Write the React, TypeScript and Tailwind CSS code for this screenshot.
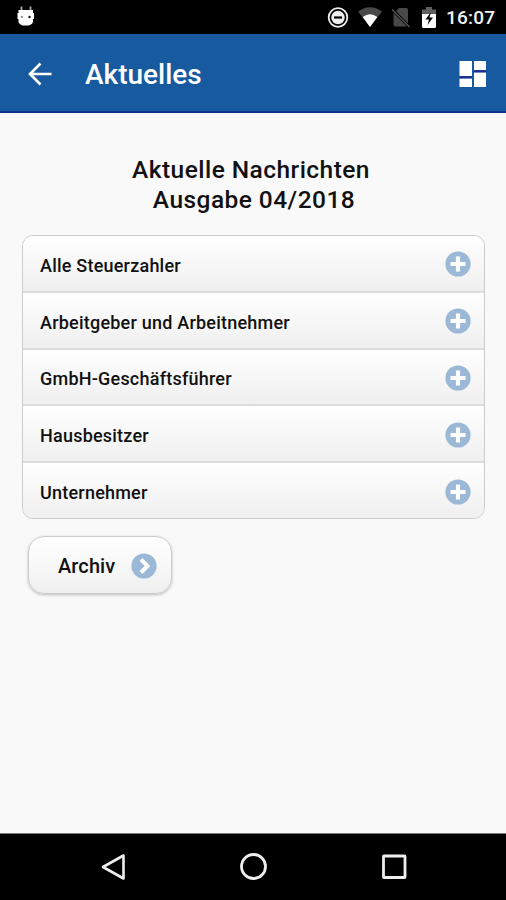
import React from 'react';

const topics = [
  'Alle Steuerzahler',
  'Arbeitgeber und Arbeitnehmer',
  'GmbH-Geschäftsführer',
  'Hausbesitzer',
  'Unternehmer',
];

const StatusBar: React.FC = () => (
  <div className="h-[34px] bg-black flex items-center justify-between pl-[17px] pr-[10px] shrink-0">
    {/* Notification icon */}
    <svg width="18" height="34" viewBox="0 0 18 34" fill="none">
      <path d="M4.500 6.500v4.500M13.500 6.500v4.500" stroke="#aaa" strokeWidth="1.800" />
      <path d="M1.500 10h14.500v3h1v6h-1v3q-1 3-4 3.500H5.500q-3-.5-4-3.500v-3h-1v-6h1z" fill="#fff" />
      <circle cx="5" cy="17" r="1.100" fill="#888" />
      <circle cx="12.500" cy="17" r="1.200" fill="#111" />
    </svg>

    <div className="flex items-center">
      {/* Do not disturb */}
      <svg width="22" height="34" viewBox="0 0 22 34" fill="none">
        <circle cx="11" cy="17.500" r="9.300" stroke="#eee" strokeWidth="1.800" />
        <circle cx="11" cy="17.500" r="6.700" fill="#eee" />
        <path d="M7 17.500h8" stroke="#000" strokeWidth="2.200" />
      </svg>
      {/* Wifi */}
      <svg className="ml-[9px]" width="24" height="34" viewBox="0 0 24 34">
        <path d="M0 11.500Q12 3 24 11.500L12 27z" fill="#484848" />
        <path d="M4.700 17Q12 11.500 19.300 17L12 27z" fill="#fff" />
      </svg>
      {/* No SIM */}
      <svg className="ml-[9px]" width="20" height="34" viewBox="0 0 20 34">
        <path d="M8 8H15q2 0 2 2v13.500L5 11zM2.500 13L16 26.500H4.500q-2 0-2-2z" fill="#484848" />
        <path d="M1 9.500L18.500 27" stroke="#5a5a5a" strokeWidth="1.200" />
      </svg>
      {/* Battery */}
      <svg className="ml-[10px]" width="16" height="34" viewBox="0 0 16 34">
        <path d="M5 7h6v2.500h4V15H1V9.500h4z" fill="#606060" />
        <path d="M1 14h14v12.500q0 1.500-1.500 1.500h-11Q1 28 1 26.500z" fill="#fff" />
        <path d="M10 12L4.500 19.500H8L6.500 25L12 17.500H8.500z" fill="#000" />
      </svg>
      <span className="ml-[9px] mt-px w-[50px] text-[19px] leading-[34px] font-medium text-[#f1f1f1] tracking-[0.2px] whitespace-nowrap">
        16:07
      </span>
    </div>
  </div>
);

const AppHeader: React.FC = () => (
  <header className="h-[79px] bg-[#185a9f] border-b-2 border-[#10308a] flex items-center pl-[28px] pr-[19px] shrink-0">
    <button className="mt-[2px]" aria-label="Zurück">
      <svg width="24" height="24" viewBox="0 0 24 24" fill="none">
        <path d="M12.500 1.500L2 12L12.500 22.500M2 12H23.500" stroke="#fff" strokeWidth="2.600" />
      </svg>
    </button>
    <h1 className="ml-[33px] mt-[4px] text-[28px] leading-8 font-medium text-white">Aktuelles</h1>
    <button className="ml-auto mt-[2px]" aria-label="Übersicht">
      <svg width="28" height="28" viewBox="0 0 28 28">
        <path d="M.5 1h12.500v15H.5zM15 1h12v9H15zM.5 18.500h12.500V27H.5zM15 12.500h12V27H15z" fill="#fff" />
        <path d="M.5 17.250h12.500M15 11.250h12" stroke="#202c94" strokeWidth="2" />
      </svg>
    </button>
  </header>
);

const PlusIcon: React.FC = () => (
  <svg width="26" height="26" viewBox="0 0 26 26">
    <circle cx="13" cy="13" r="12.600" fill="#9bb8d6" />
    <path d="M13 5.500v15M5.500 13h15" stroke="#fff" strokeWidth="4.200" />
  </svg>
);

const ArrowIcon: React.FC = () => (
  <svg width="26" height="26" viewBox="0 0 26 26" fill="none">
    <circle cx="13" cy="13" r="12.600" fill="#9bb8d6" />
    <path d="M10 6.500L16.500 13L10 19.500" stroke="#fff" strokeWidth="4" />
  </svg>
);

const NavigationBar: React.FC = () => (
  <nav className="h-[67px] bg-black border-t border-[#777] flex items-center justify-between pl-[100px] pr-[98px] shrink-0">
    <svg width="28" height="28" viewBox="0 0 28 28" fill="none">
      <path d="M23.500 2.500v23L3 14z" stroke="#eee" strokeWidth="2.600" strokeLinejoin="round" />
    </svg>
    <svg width="28" height="28" viewBox="0 0 28 28" fill="none">
      <circle cx="13.500" cy="13.500" r="12" stroke="#eee" strokeWidth="2.800" />
    </svg>
    <svg width="28" height="28" viewBox="0 0 28 28" fill="none">
      <rect x="3.500" y="3" width="21.500" height="21.500" rx="0.500" stroke="#eee" strokeWidth="2.800" />
    </svg>
  </nav>
);

const App: React.FC = () => {
  return (
    <div className="w-[506px] h-[900px] flex flex-col overflow-hidden bg-[#f9f9f9] font-[Roboto,sans-serif] text-[#111]">
      <StatusBar />
      <AppHeader />

      <main className="flex-1 px-[21.500px] pt-[42px]">
        <h2 className="text-center text-[24.500px] leading-[29.500px] font-medium tracking-[0.450px] -ml-[4px]">
          Aktuelle Nachrichten
          <span className="block pl-[6px]">Ausgabe 04/2018</span>
        </h2>

        {/* Topic list */}
        <ul className="mt-[21px] w-[463.500px] h-[284px] flex flex-col rounded-[11px] border-[1.500px] border-[#ccc] overflow-hidden divide-y-2 divide-[#dcdcdc]">
          {topics.map((topic) => (
            <li
              key={topic}
              className="flex-1 flex items-center justify-between pl-[17.500px] pr-[13.500px] bg-linear-to-b from-white to-[#efefef]"
            >
              <span className="mt-[5px] text-[18px] leading-6 font-medium tracking-[0.220px]">{topic}</span>
              <span className="mt-[2px]">
                <PlusIcon />
              </span>
            </li>
          ))}
        </ul>

        <button className="mt-[17px] ml-[6.500px] w-[144px] h-[58px] flex items-center justify-between pl-[29px] pr-[14.500px] rounded-[16px] border-[1.500px] border-[#ccc] bg-linear-to-b from-white to-[#f0f0f0] shadow-[0_1px_3px_rgba(0,0,0,0.25)]">
          <span className="mt-[2px] text-[20px] leading-6 font-medium tracking-[0.100px]">Archiv</span>
          <span className="mt-px">
            <ArrowIcon />
          </span>
        </button>
      </main>

      <NavigationBar />
    </div>
  );
};

export default App;
